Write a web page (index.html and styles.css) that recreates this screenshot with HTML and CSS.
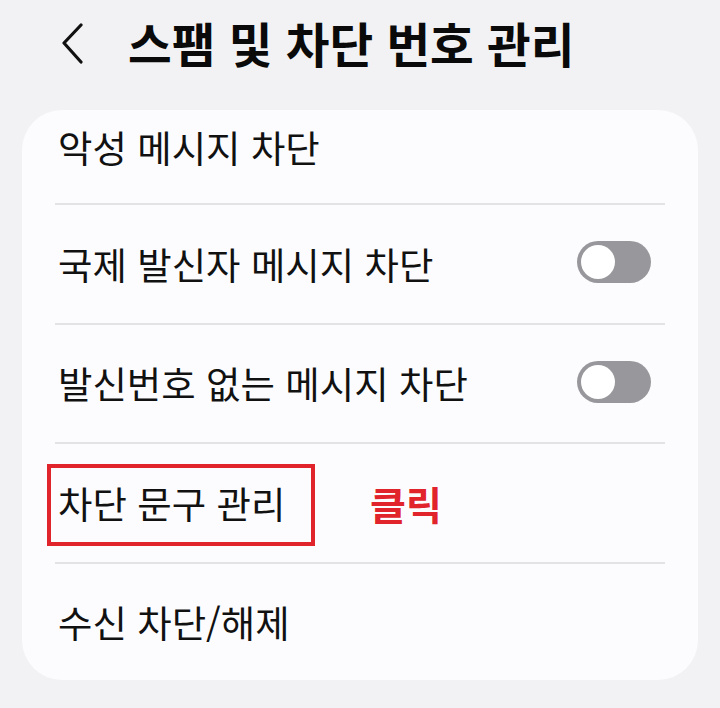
FILE: index.html
```html
<!DOCTYPE html>
<html lang="ko">
<head>
    <meta charset="UTF-8">
    <meta name="viewport" content="width=device-width, initial-scale=1.0">
    <title>스팸 및 차단 번호 관리</title>
    <link rel="stylesheet" href="styles.css">
</head>
<body>
    <!-- Header -->
    <header class="header">
        <button class="back-btn" aria-label="뒤로">
            <svg width="24" height="42" viewBox="0 0 24 42">
                <polyline points="20,3 3,21 20,40" fill="none" stroke="#111" stroke-width="3.2" stroke-linecap="round" stroke-linejoin="round"/>
            </svg>
        </button>
        <h1 class="header-title">스팸 및 차단 번호 관리</h1>
    </header>

    <!-- Settings list -->
    <div class="card">
        <div class="row row-first">
            <span class="row-label">악성 메시지 차단</span>
        </div>
        <div class="row">
            <span class="row-label">국제 발신자 메시지 차단</span>
            <span class="toggle"><span class="toggle-thumb"></span></span>
        </div>
        <div class="row">
            <span class="row-label">발신번호 없는 메시지 차단</span>
            <span class="toggle"><span class="toggle-thumb"></span></span>
        </div>
        <div class="row">
            <span class="row-label">차단 문구 관리</span>
            <!-- annotation -->
            <span class="highlight-box"></span>
            <span class="click-note">클릭</span>
        </div>
        <div class="row row-last">
            <span class="row-label">수신 차단/해제</span>
        </div>
    </div>
</body>
</html>
```

FILE: styles.css
```css
* {
    margin: 0;
    padding: 0;
    box-sizing: border-box;
    font-family: "Noto Sans CJK KR", "Noto Sans", sans-serif;
}

body {
    background-color: #f2f2f4;
    color: #111;
}

.header {
    height: 88px;
    display: flex;
    align-items: center;
    padding-left: 61px;
}

.back-btn {
    background: none;
    border: none;
    width: 24px;
    height: 42px;
    display: flex;
    margin-right: 43px;
    margin-top: -2px;
}

.header-title {
    font-size: 47.5px;
    font-weight: 700;
    color: #0a0a0a;
    margin-top: -4px;
}

.card {
    background-color: #fcfcfe;
    border-radius: 40px;
    margin: 22px 22px 0;
    padding: 0 33px;
    overflow: hidden;
}

.row {
    position: relative;
    height: 119.5px;
    display: flex;
    align-items: center;
    justify-content: space-between;
    border-bottom: 2px solid #e3e3e6;
}

.row-first {
    height: 95px;
    align-items: flex-start;
    padding-top: 15px;
}

.row-last {
    height: 116.5px;
    border-bottom: none;
}

.row-label {
    font-size: 37.4px;
    line-height: 44px;
    padding-left: 3px;
    color: #111;
}

.toggle {
    position: relative;
    width: 74px;
    height: 42px;
    border-radius: 21px;
    background-color: #98989c;
    margin-right: 14px;
    margin-top: -3px;
}

.toggle-thumb {
    position: absolute;
    top: 4px;
    left: 4px;
    width: 34px;
    height: 34px;
    border-radius: 50%;
    background-color: #fff;
}

.highlight-box {
    position: absolute;
    top: 20px;
    left: -8px;
    width: 268px;
    height: 82px;
    border: 4px solid #e1232b;
}

.click-note {
    position: absolute;
    left: 315px;
    top: 36px;
    font-size: 39px;
    line-height: 46px;
    font-weight: 700;
    color: #e1232b;
}
```
